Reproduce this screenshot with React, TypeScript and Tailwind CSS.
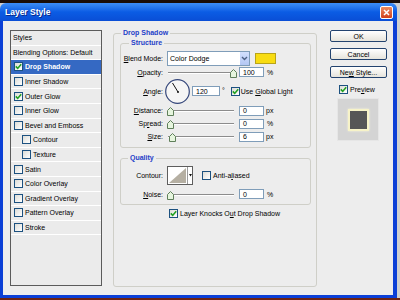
import React from 'react';

// Layer Style dialog (Photoshop on XP) - compact 400x300 capture

type Effect = { label: string; checked?: boolean; selected?: boolean; sub?: boolean };

const effects: Effect[] = [
  { label: 'Drop Shadow', checked: true, selected: true },
  { label: 'Inner Shadow' },
  { label: 'Outer Glow', checked: true },
  { label: 'Inner Glow' },
  { label: 'Bevel and Emboss' },
  { label: 'Contour', sub: true },
  { label: 'Texture', sub: true },
  { label: 'Satin' },
  { label: 'Color Overlay' },
  { label: 'Gradient Overlay' },
  { label: 'Pattern Overlay' },
  { label: 'Stroke' },
];

const Check: React.FC<{ checked?: boolean }> = ({ checked }) => (
  <span className="flex h-[9px] w-[9px] shrink-0 items-center justify-center border border-[#1c5180] bg-gradient-to-br from-[#dcdcd7] to-white">
    {checked && (
      <svg width="7" height="7" viewBox="0 0 7 7">
        <path d="M0.8 3.4 L2.7 5.4 L6.2 1.2" fill="none" stroke="#21a121" strokeWidth="1.6" />
      </svg>
    )}
  </span>
);

const Label: React.FC<{ children: React.ReactNode }> = ({ children }) => (
  <span className="w-[46px] shrink-0 pr-[4px] text-right">{children}</span>
);

const Field: React.FC<{ value: string; wide?: boolean }> = ({ value, wide }) => (
  <span
    className={
      wide
        ? 'ml-[2px] flex h-[10px] w-[28px] shrink-0 items-center border border-[#7f9db9] bg-white pl-[3px]'
        : 'ml-[3px] flex h-[10px] w-[25px] shrink-0 items-center border border-[#7f9db9] bg-white pl-[3px]'
    }
  >
    {value}
  </span>
);

const Slider: React.FC<{ value: number; max: number }> = ({ value, max }) => (
  <div className="relative h-[11px] w-[69px] shrink-0">
    <div className="absolute left-[1px] right-[2px] top-[5px] h-[2px] border-t border-[#8c8c8c] bg-white" />
    <svg
      className="absolute top-[2px]"
      style={{ left: `${(value / max) * 63}px` }}
      width="7"
      height="9"
      viewBox="0 0 7 9"
    >
      <path d="M3.5 0.5 L6.5 3.5 L6.5 8.5 L0.5 8.5 L0.5 3.5 Z" fill="#e6f5de" stroke="#5f7f5a" />
    </svg>
  </div>
);

const Button: React.FC<{ children: React.ReactNode }> = ({ children }) => (
  <div className="flex h-[12px] w-[57px] items-center justify-center rounded-[2px] border border-[#23436f] bg-gradient-to-b from-white to-[#e6e4dc]">
    {children}
  </div>
);

export default function App() {
  return (
    <div className="flex h-[300px] w-[400px] flex-col overflow-hidden bg-[#cfcfcf] font-['Liberation_Sans',Arial,sans-serif] text-[7px] leading-none text-black">
      <div className="h-[3px] shrink-0 bg-[#1a0d08]" />

      <div className="flex w-[397px] flex-col">
        {/* title bar */}
        <div className="flex h-[18px] items-center justify-between rounded-t-[6px] bg-gradient-to-b from-[#3d8ef7] via-[#0b5ce4] to-[#0a4ed6] pl-[5px] pr-[4px]">
          <span className="text-[8.5px] font-bold text-white [text-shadow:1px_1px_0_#0a2a8a]">Layer Style</span>
          <div className="flex h-[13px] w-[13px] items-center justify-center rounded-[2px] border border-white bg-gradient-to-b from-[#ec8a5f] to-[#cf3f18]">
            <svg width="7" height="7" viewBox="0 0 7 7">
              <path d="M1 1 L6 6 M6 1 L1 6" stroke="white" strokeWidth="1.5" />
            </svg>
          </div>
        </div>

        {/* body */}
        <div className="flex h-[277px] items-start border-b-[3px] border-l-[3px] border-r-[4px] border-[#0b3fd6] bg-[#ededed] pl-[7px]">
          {/* styles list */}
          <div className="mt-[9px] flex h-[256px] w-[92px] shrink-0 flex-col border border-[#5b5b5b] bg-[#ebebeb]">
            <div className="flex h-[14.6px] items-center border-b border-white pl-[2px]">Styles</div>
            <div className="flex h-[14.6px] items-center border-b border-white pl-[2px]">Blending Options: Default</div>
            {effects.map((e) => (
              <div
                key={e.label}
                className={
                  e.selected
                    ? 'flex h-[14.6px] items-center border-b border-white bg-[#3569c3] pl-[3px] font-bold text-white'
                    : e.sub
                      ? 'flex h-[14.6px] items-center border-b border-white pl-[11px]'
                      : 'flex h-[14.6px] items-center border-b border-white pl-[3px]'
                }
              >
                <Check checked={e.checked} />
                <span className="ml-[2px]">{e.label}</span>
              </div>
            ))}
          </div>

          {/* Drop Shadow group */}
          <fieldset className="ml-[11px] mt-[7px] h-[259px] w-[204px] shrink-0 rounded-[3px] border border-[#cfcfc8]">
            <legend className="ml-[7px] px-[2px] text-[7px] font-bold leading-[10px] text-[#1e40c8]">Drop Shadow</legend>
            <div className="flex flex-col pl-[6px] pr-[5px]">
              <fieldset className="rounded-[3px] border border-[#cfcfc8]">
                <legend className="ml-[8px] px-[2px] text-[7px] font-bold leading-[10px] text-[#1e40c8]">Structure</legend>
                <div className="flex flex-col pb-[4px] pt-[3px]">
                  <div className="flex h-[15px] items-center">
                    <Label>
                      <u>B</u>lend Mode:
                    </Label>
                    <div className="flex h-[15px] w-[83px] shrink-0 items-center justify-between border border-[#7f9db9] bg-white pl-[2px]">
                      <span>Color Dodge</span>
                      <span className="flex h-[13px] w-[9px] items-center justify-center bg-gradient-to-b from-[#d3e0fd] to-[#b3c7f4]">
                        <svg width="7" height="5" viewBox="0 0 7 5">
                          <path d="M1 1 L3.5 3.5 L6 1" fill="none" stroke="#4d6185" strokeWidth="1.4" />
                        </svg>
                      </span>
                    </div>
                    <span className="ml-[5px] h-[11px] w-[21px] shrink-0 border border-[#b9a418] bg-[#f8dc12]" />
                  </div>

                  <div className="flex h-[12px] items-center">
                    <Label>
                      <u>O</u>pacity:
                    </Label>
                    <Slider value={100} max={100} />
                    <Field value="100" />
                    <span className="ml-[3px]">%</span>
                  </div>

                  <div className="flex h-[26px] items-center">
                    <Label>
                      <u>A</u>ngle:
                    </Label>
                    <svg className="ml-[-2px] shrink-0" width="25" height="25" viewBox="0 0 25 25">
                      <circle cx="12.5" cy="12.5" r="11.8" fill="#f5f5f5" stroke="#34467a" strokeWidth="1.2" />
                      <line x1="13" y1="13" x2="7.5" y2="4" stroke="#111" strokeWidth="1" />
                      <circle cx="13" cy="13" r="1" fill="#111" />
                    </svg>
                    <Field value="120" wide />
                    <span className="ml-[2px] self-start pt-[9px]">°</span>
                    <span className="ml-[6px]">
                      <Check checked />
                    </span>
                    <span className="ml-[1px]">
                      Use <u>G</u>lobal Light
                    </span>
                  </div>

                  <div className="flex h-[13px] items-center">
                    <Label>
                      <u>D</u>istance:
                    </Label>
                    <Slider value={0} max={100} />
                    <Field value="0" />
                    <span className="ml-[2px]">px</span>
                  </div>

                  <div className="flex h-[13px] items-center">
                    <Label>
                      Sp<u>r</u>ead:
                    </Label>
                    <Slider value={0} max={100} />
                    <Field value="0" />
                    <span className="ml-[3px]">%</span>
                  </div>

                  <div className="flex h-[13px] items-center">
                    <Label>
                      <u>S</u>ize:
                    </Label>
                    <Slider value={6} max={250} />
                    <Field value="6" />
                    <span className="ml-[2px]">px</span>
                  </div>
                </div>
              </fieldset>

              <fieldset className="mt-[5px] rounded-[3px] border border-[#cfcfc8]">
                <legend className="ml-[7px] px-[2px] text-[7px] font-bold leading-[10px] text-[#1e40c8]">Quality</legend>
                <div className="flex flex-col pb-[4px] pt-[3px]">
                  <div className="flex h-[19px] items-center">
                    <Label>Contour:</Label>
                    <svg className="shrink-0" width="26" height="19" viewBox="0 0 26 19">
                      <rect x="0.5" y="0.5" width="25" height="18" fill="white" stroke="#5e5e5e" />
                      <polygon points="2,17 19,2 19,17" fill="#b5afa2" />
                      <line x1="20.5" y1="1" x2="20.5" y2="18" stroke="#9a9a9a" />
                      <polygon points="22,8 25,8 23.5,10.5" fill="#111" />
                    </svg>
                    <span className="ml-[9px]">
                      <Check />
                    </span>
                    <span className="ml-[2px]">
                      Anti-a<u>l</u>iased
                    </span>
                  </div>

                  <div className="mt-[3px] flex h-[12px] items-center">
                    <Label>
                      <u>N</u>oise:
                    </Label>
                    <Slider value={0} max={100} />
                    <Field value="0" />
                    <span className="ml-[3px]">%</span>
                  </div>
                </div>
              </fieldset>

              <div className="mt-[2px] flex h-[12px] items-center pl-[49px]">
                <Check checked />
                <span className="ml-[2px]">
                  Layer Knocks O<u>u</u>t Drop Shadow
                </span>
              </div>
            </div>
          </fieldset>

          {/* buttons and preview */}
          <div className="ml-[13px] mt-[9px] flex w-[57px] shrink-0 flex-col">
            <Button>OK</Button>
            <div className="mt-[6px]">
              <Button>Cancel</Button>
            </div>
            <div className="mt-[6px]">
              <Button>
                <span>
                  Ne<u>w</u> Style...
                </span>
              </Button>
            </div>
            <div className="mt-[5px] flex h-[12px] items-center pl-[9px]">
              <Check checked />
              <span className="ml-[2px]">
                Pre<u>v</u>iew
              </span>
            </div>
            <div className="ml-[7px] mt-[3px] flex h-[43px] w-[42px] items-center justify-center border border-[#e6e6e6] bg-[#d4d4d4]">
              <div className="h-[22px] w-[21px] border-2 border-[#f7f3c8] bg-[#565656] shadow-[0_0_2px_#fbf8d8]" />
            </div>
          </div>
        </div>
      </div>

      <div className="h-[2px] shrink-0 bg-[#6e2410]" />
    </div>
  );
}
